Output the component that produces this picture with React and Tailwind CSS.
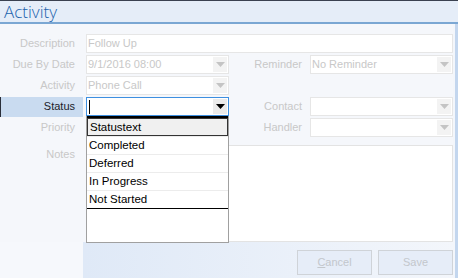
import React from 'react'

const Arrow = ({ dark }) => (
  <div className={`w-[14px] h-[15px] mt-[1px] mr-[1px] flex items-center justify-center ${dark ? 'bg-[#ebebeb]' : 'bg-[#f3f3f3]'}`}>
    <svg width="9" height="5" viewBox="0 0 9 5">
      <path d="M0 0 H9 L4.5 5 Z" fill={dark ? '#000000' : '#c4c4c4'} />
    </svg>
  </div>
)

const Field = ({ w, text, combo }) => (
  <div className={`${w} h-[19px] bg-white border border-[#e6e6e6] flex items-start justify-between`}>
    <span className="pl-[1px] leading-[17px] text-[#c8c8c8]">{text}</span>
    {combo && <Arrow />}
  </div>
)

const Label = ({ children, w = 'w-[83px]', dark }) => (
  <div className={`${w} pr-[8px] text-right leading-[19px] ${dark ? 'text-[#1b1b2a]' : 'text-[#c8c8c8]'}`}>{children}</div>
)

export default function App() {
  const opciones = ['Statustext', 'Completed', 'Deferred', 'In Progress', 'Not Started']

  return (
    <div className="w-[458px] h-[278px] relative overflow-hidden bg-[#f5f7fb] text-[11px] font-['Liberation_Sans',Arial,sans-serif]">
      <div className="h-[22px] border-t border-[#3a4150] bg-[#e5edf8] pl-[4px]">
        <span className="text-[17px] leading-[21px] text-[#1b63ad] font-['Open_Sans',sans-serif] font-light">Activity</span>
      </div>
      <div className="h-[2px] bg-[#7ba7d3]" />

      <div className="flex">
        <div className="flex-1 flex flex-col pt-[10px]">
          <div className="flex h-[21px]">
            <Label>Description</Label>
            <div className="w-[3px]" />
            <Field w="w-[367px]" text="Follow Up" />
          </div>
          <div className="flex h-[21px]">
            <Label>Due By Date</Label>
            <div className="w-[3px]" />
            <Field w="w-[143px]" text="9/1/2016 08:00" combo />
            <Label w="w-[81px]">Reminder</Label>
            <Field w="w-[143px]" text="No Reminder" combo />
          </div>
          <div className="flex h-[21px]">
            <Label>Activity</Label>
            <div className="w-[3px]" />
            <Field w="w-[143px]" text="Phone Call" combo />
          </div>
          <div className="flex h-[21px]">
            <div className="w-[83px] h-[20px] bg-[#c9dbf0] border-l border-[#2a2f3a] pr-[8px] text-right leading-[19px] text-[#1b1b2a]">Status</div>
            <div className="w-[3px]" />
            <div className="w-[143px] h-[19px] bg-white border border-[#3d8fe0] flex items-start justify-between">
              <div className="w-[1px] h-[14px] bg-black ml-[2px] mt-[2px]" />
              <Arrow dark />
            </div>
            <Label w="w-[81px]">Contact</Label>
            <Field w="w-[143px]" combo />
          </div>
          <div className="flex h-[21px]">
            <Label>Priority</Label>
            <div className="w-[3px]" />
            <Field w="w-[143px]" combo />
            <Label w="w-[81px]">Handler</Label>
            <Field w="w-[143px]" combo />
          </div>
          <div className="flex mt-[6px]">
            <div className="w-[83px] pr-[8px] pt-[1px] text-right text-[#c8c8c8]">Notes</div>
            <div className="w-[3px]" />
            <div className="w-[367px] h-[97px] bg-white border border-[#e3e3e3]" />
          </div>
          <div className="flex h-[36px]">
            <div className="w-[83px] bg-[#f6f8fc]" />
            <div className="flex-1 flex justify-end items-start gap-[6px] pt-[8px] bg-gradient-to-r from-[#dfe9f7] to-[#f3f6fb]">
              <div className="w-[75px] h-[25px] border border-[#cfd3d8] bg-[#e6edf8] text-[#c3c7cc] flex items-center justify-center">
                <span><span className="underline">C</span>ancel</span>
              </div>
              <div className="w-[75px] h-[25px] border border-[#cfd3d8] bg-[#e6edf8] text-[#c3c7cc] flex items-center justify-center">
                Save
              </div>
            </div>
          </div>
        </div>
        <div className="w-[2px] h-[256px] bg-[#f3f6fb]" />
        <div className="w-[3px] h-[256px] bg-[#c3d6ee]" />
      </div>

      <div className="absolute left-[86px] top-[116px] w-[143px] h-[127px] bg-white border-l border-r border-b border-[#a0a0a0]">
        <div className="border-t-2 border-b border-black">
          {opciones.map((o, i) => (
            <div
              key={o}
              className={`h-[18px] leading-[17px] pl-[2px] text-[11.5px] text-black ${i === 0 ? 'bg-[#f0f0f0] border border-[#333]' : 'border-t border-[#ececec]'}`}
            >
              {o}
            </div>
          ))}
        </div>
      </div>
    </div>
  )
}
